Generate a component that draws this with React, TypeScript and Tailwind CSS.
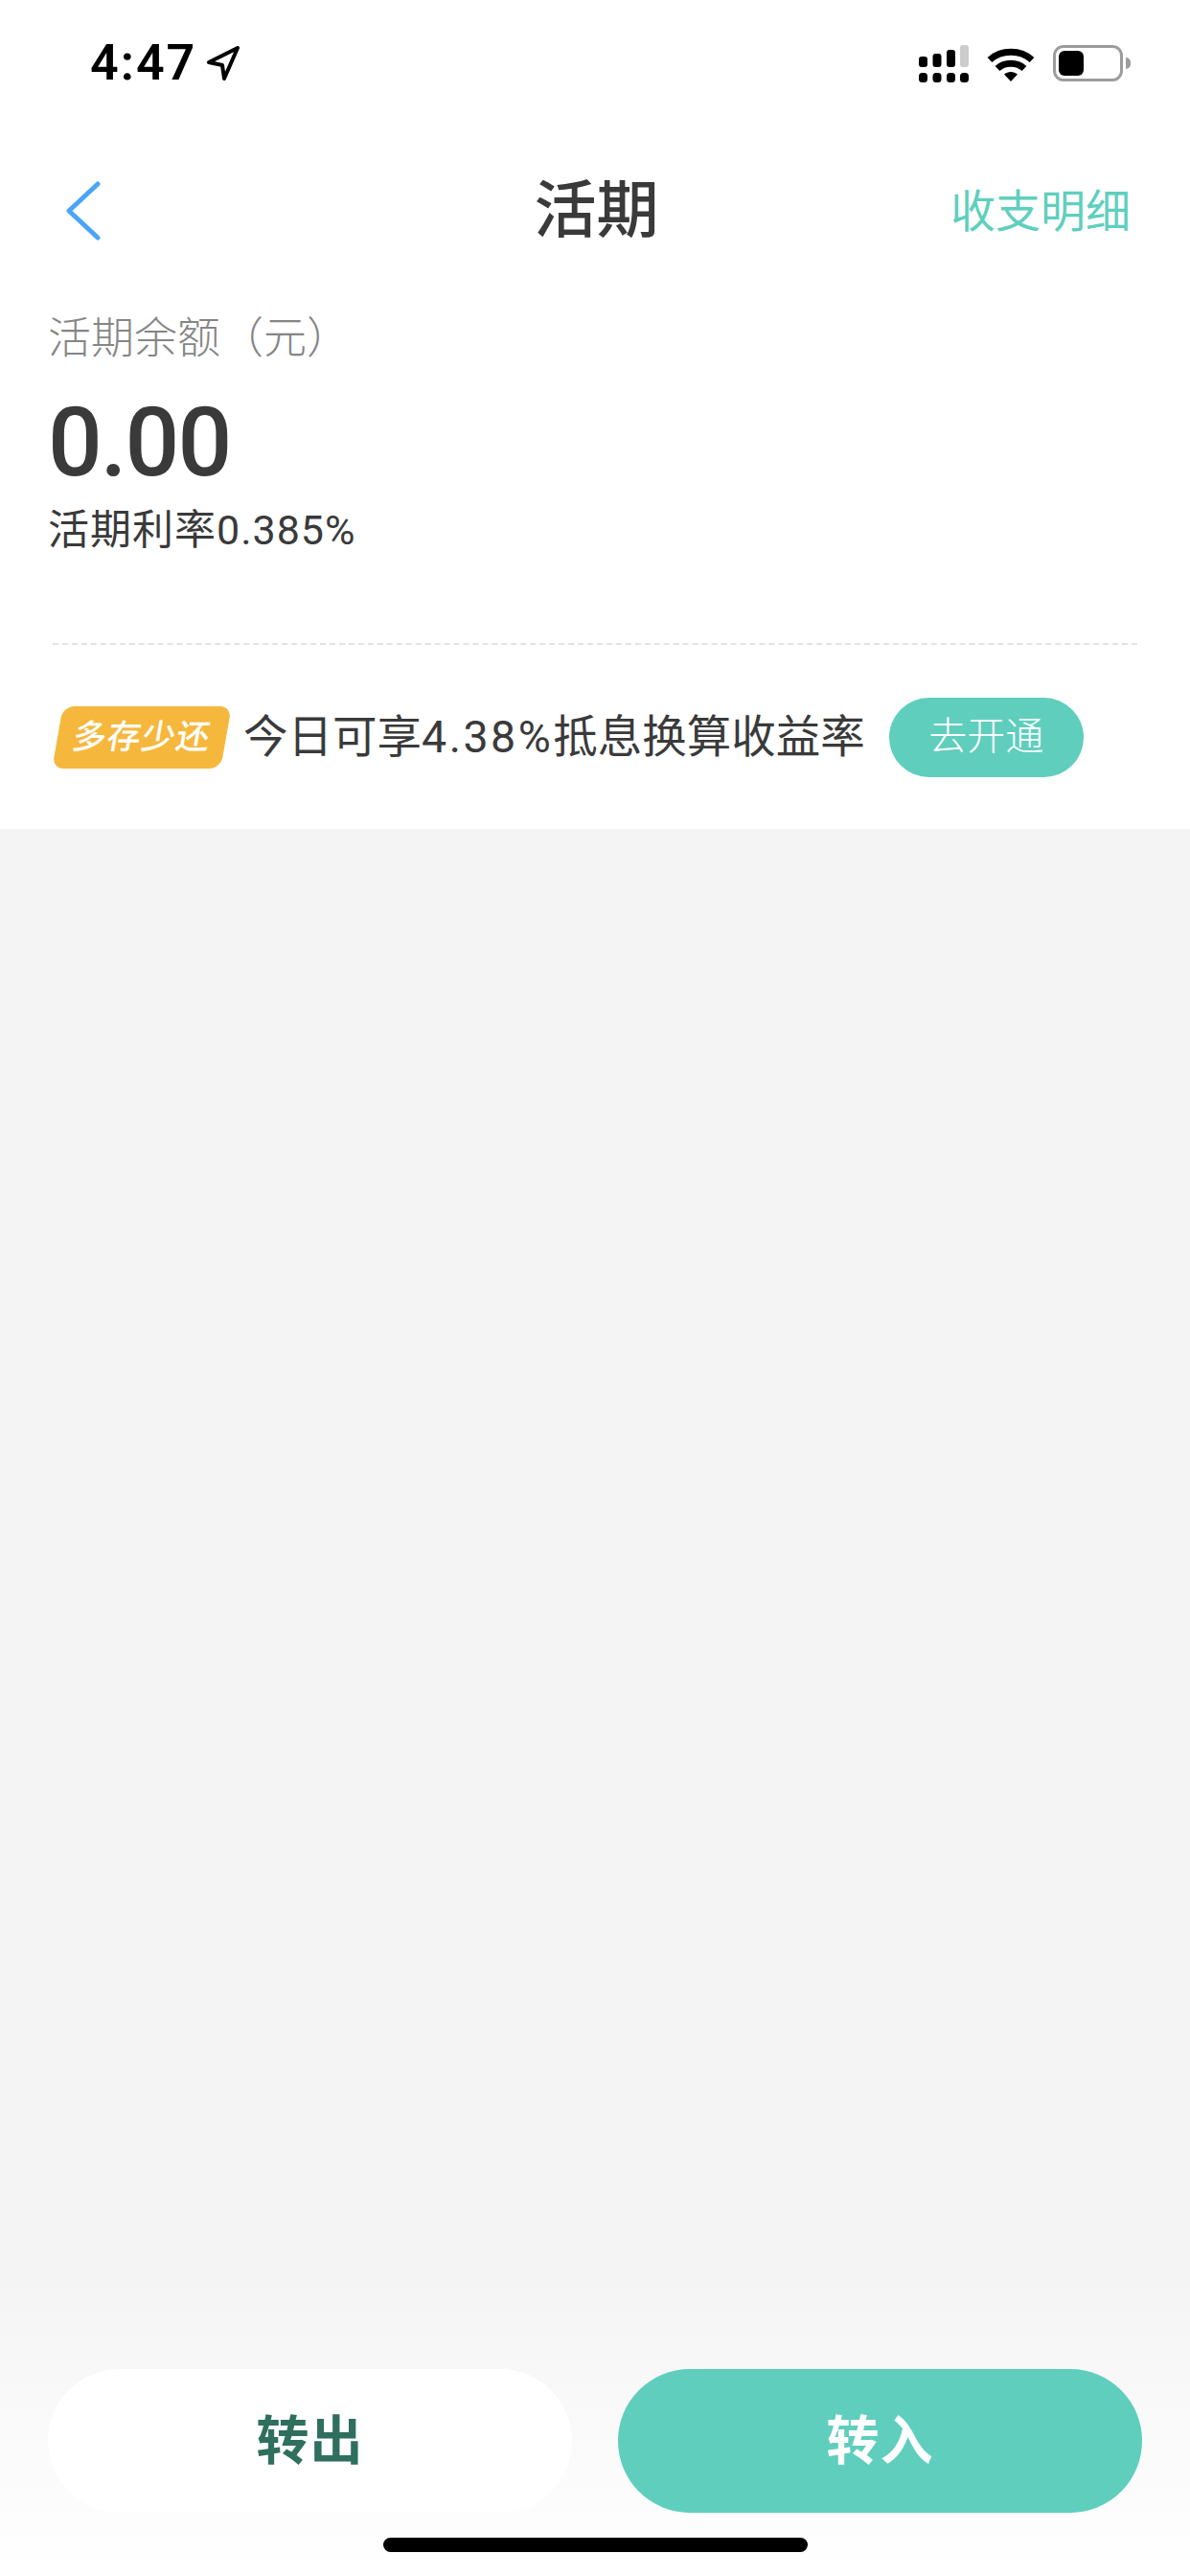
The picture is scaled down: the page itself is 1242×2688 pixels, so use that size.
function SignalIcon() {
  return (
    <svg width="52" height="39" viewBox="0 0 52 39" fill="#000">
      <rect x="0" y="12" width="9" height="11" rx="3" />
      <rect x="14.500" y="9" width="9" height="14" rx="3" />
      <rect x="29" y="5" width="9" height="18" rx="3" />
      <rect x="43" y="0" width="9" height="23" rx="3" fill="#cccccc" />
      <rect x="0" y="29" width="9" height="10" rx="3.500" />
      <rect x="14.500" y="29" width="9" height="10" rx="3.500" />
      <rect x="29" y="29" width="9" height="10" rx="3.500" />
      <rect x="43" y="29" width="9" height="10" rx="3.500" />
    </svg>
  );
}

function WifiIcon() {
  return (
    <svg width="50" height="37" viewBox="0 0 50 37" fill="none">
      <path d="M3 14.500C15 3.500 35 3.500 47 14.500" stroke="#000" strokeWidth="7" />
      <path d="M11 23.500C18.500 16.500 31.500 16.500 39 23.500" stroke="#000" strokeWidth="7" />
      <path d="M18 29.500C22 26 28 26 32 29.500L25 37Z" fill="#000" />
    </svg>
  );
}

function Battery() {
  return (
    <div className="flex items-center gap-[3px]">
      <div className="h-[38px] w-[73px] rounded-[11px] border-[3px] border-[#9c9c9c] p-[3px]">
        <div className="h-full w-[26px] rounded-[6px] bg-black" />
      </div>
      <div className="h-[12px] w-[5px] rounded-r-full bg-[#9c9c9c]" />
    </div>
  );
}

export default function App() {
  return (
    <div className="flex h-[2688px] w-[1242px] flex-col bg-white font-['Roboto','Noto_Sans_CJK_SC',sans-serif] text-[#3a3a3a]">
      <div className="bg-white">
        {/* status bar */}
        <div className="flex h-[132px] items-center justify-between pr-[62px] pl-[94px]">
          <div className="flex items-center gap-[11px] text-black">
            <span className="text-[52px] leading-none font-semibold tracking-[2px]">4:47</span>
            <svg width="34" height="36" viewBox="0 0 34 36" fill="none">
              <path
                d="M2 17L32 2L18 34L16 20Z"
                stroke="#000"
                strokeWidth="4"
                strokeLinejoin="round"
              />
            </svg>
          </div>
          <div className="flex items-center gap-[19px]">
            <SignalIcon />
            <WifiIcon />
            <Battery />
          </div>
        </div>

        {/* nav */}
        <div className="grid h-[176px] grid-cols-3 items-center pr-[62px] pl-[68px]">
          <svg width="38" height="62" viewBox="0 0 38 62" fill="none">
            <path
              d="M34 3L4 31L34 59"
              stroke="#4ba5f5"
              strokeWidth="5"
              strokeLinecap="round"
              strokeLinejoin="round"
            />
          </svg>
          <h1 className="-ml-[3px] text-center text-[65px] leading-none font-medium">活期</h1>
          <div className="text-right text-[47px] leading-none text-[#5fcfbe]">收支明细</div>
        </div>

        {/* balance */}
        <div className="px-[50px] pt-[16px]">
          <p className="text-[45px] leading-[60px] font-light text-[#858585]">活期余额（元）</p>
          <p className="mt-[23px] text-[100px] leading-[110px] font-medium tracking-[-2px]">0.00</p>
          <p className="mt-[6px] text-[43px] leading-[60px] tracking-[1px]">活期利率0.385%</p>
        </div>

        <div className="mx-[55px] mt-[88px] border-t-2 border-dashed border-[#e2e2e2]" />

        {/* promo */}
        <div className="flex h-[192px] items-center pl-[55px]">
          <span className="ml-[5px] flex h-[65px] w-[176px] -skew-x-[10deg] items-center justify-center rounded-[12px] bg-[#f5b83d] text-[35px] leading-none font-medium tracking-[1px] whitespace-nowrap text-white">
            多存少还
          </span>
          <span className="ml-[18px] text-[46.500px] leading-none whitespace-nowrap">
            今日可享<span className="tracking-[2.500px]">4.38%</span>抵息换算收益率
          </span>
          <span className="ml-[25px] flex h-[83px] w-[203px] items-center justify-center rounded-full bg-[#5fcebd] text-[40px] leading-none font-light text-white">
            去开通
          </span>
        </div>
      </div>

      {/* empty list area + actions */}
      <div className="flex flex-1 flex-col justify-end bg-linear-to-b from-[#f4f4f4] from-[82%] to-white">
        <div className="flex gap-[48px] px-[50px]">
          <button className="h-[150px] flex-1 rounded-full bg-white text-[55px] font-bold tracking-[1px] text-[#2f6f5e]">
            转出
          </button>
          <button className="h-[150px] flex-1 rounded-full bg-[#5fcebd] text-[55px] font-bold tracking-[1px] text-white">
            转入
          </button>
        </div>
        <div className="flex h-[66px] items-start justify-center pt-[26px]">
          <div className="h-[15px] w-[443px] rounded-full bg-black" />
        </div>
      </div>
    </div>
  );
}
